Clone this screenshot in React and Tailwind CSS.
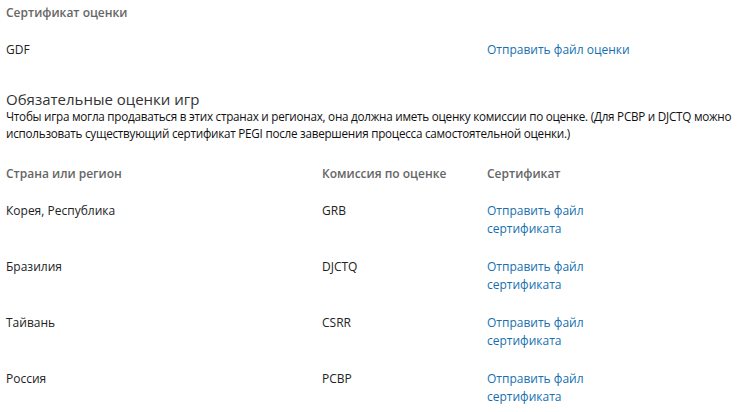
const font = { fontFamily: '"Segoe UI", "Open Sans", "Noto Sans", sans-serif' };

const rows = [
  { country: 'Корея, Республика', board: 'GRB' },
  { country: 'Бразилия', board: 'DJCTQ' },
  { country: 'Тайвань', board: 'CSRR' },
  { country: 'Россия', board: 'PCBP' },
];

function Link({ children }) {
  return <a href="#" className="text-[#1570b0] no-underline">{children}</a>;
}

export default function App() {
  return (
    <div className="w-[746px] h-[412px] bg-white px-[6px] text-[12px] leading-[17px] text-[#222] overflow-hidden" style={font}>
      <div className="pt-[4px] font-semibold text-[#666]">Сертификат оценки</div>

      <div className="mt-[20px] grid grid-cols-[481px_1fr]">
        <div>GDF</div>
        <div><Link>Отправить файл оценки</Link></div>
      </div>

      <div className="mt-[32px] text-[15px] leading-[18px] text-[#333]">Обязательные оценки игр</div>
      <p className="text-[#111] text-[11.7px] whitespace-nowrap tracking-[-0.25px]">
        Чтобы игра могла продаваться в этих странах и регионах, она должна иметь оценку комиссии по оценке. (Для PCBP и DJCTQ можно<br />
        использовать существующий сертификат PEGI после завершения процесса самостоятельной оценки.)
      </p>

      <div className="mt-[23px] grid grid-cols-[316px_165px_1fr] font-semibold text-[#666]">
        <div>Страна или регион</div>
        <div>Комиссия по оценке</div>
        <div>Сертификат</div>
      </div>

      <div className="mt-[20px] flex flex-col gap-[20px]">
        {rows.map(r => (
          <div key={r.board} className="grid grid-cols-[316px_165px_1fr] leading-[18px]">
            <div>{r.country}</div>
            <div>{r.board}</div>
            <div className="w-[100px]"><Link>Отправить файл сертификата</Link></div>
          </div>
        ))}
      </div>
    </div>
  );
}
